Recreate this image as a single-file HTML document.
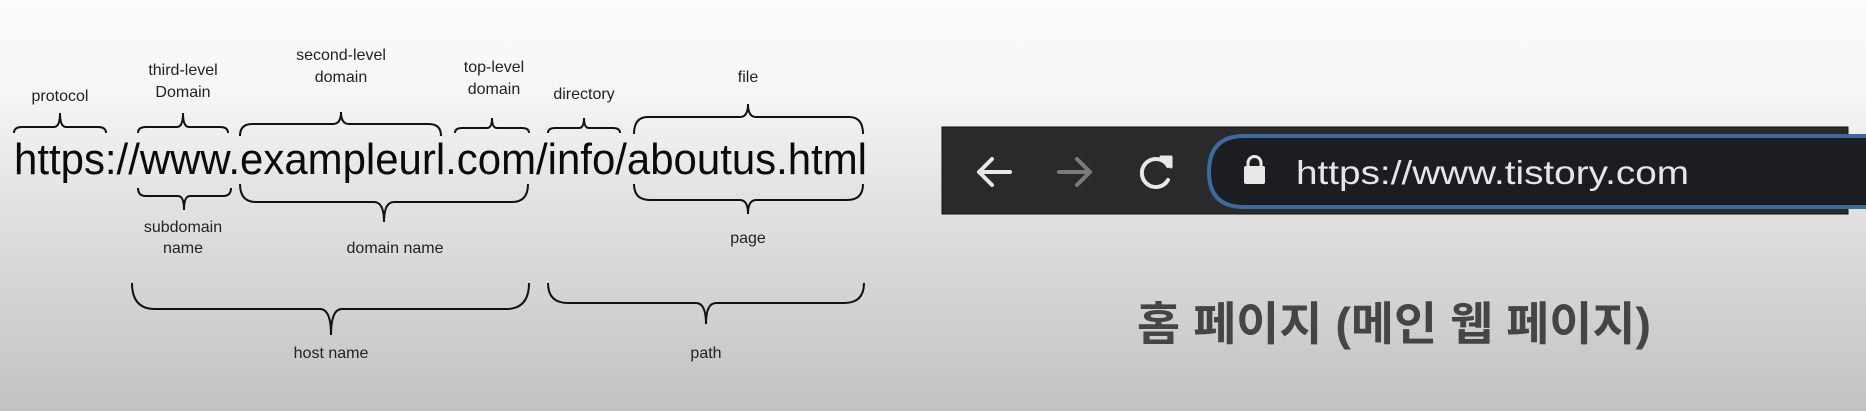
<!DOCTYPE html>
<html><head><meta charset="utf-8"><style>
html,body{margin:0;padding:0;width:1866px;height:411px;overflow:hidden}
body{background:linear-gradient(#fbfbfb 0px,#f6f6f6 90px,#e2e2e2 200px,#c2c2c2 411px)}
svg{display:block}
</style></head><body>
<svg width="1866" height="411" viewBox="0 0 1866 411" xmlns="http://www.w3.org/2000/svg">
<g fill="none" stroke="#111" stroke-width="2">
<path d="M14 133 Q14 127 22 127 L54 127 Q60 127 60 113 Q60 127 66 127 L98 127 Q106 127 106 133"/>
<path d="M138 133 Q138 127 146 127 L177 127 Q183 127 183 113 Q183 127 189 127 L220 127 Q228 127 228 133"/>
<path d="M240 136 Q240 124 252 124 L333 124 Q341 124 341 112 Q341 124 349 124 L429 124 Q441 124 441 136"/>
<path d="M455 133 Q455 128 462 128 L487 128 Q492 128 492 118 Q492 128 497 128 L522 128 Q529 128 529 133"/>
<path d="M548 133 Q548 128 555 128 L579 128 Q584 128 584 118 Q584 128 589 128 L613 128 Q620 128 620 133"/>
<path d="M634 134 Q634 117 648 117 L740 117 Q748 117 748 104 Q748 117 756 117 L849 117 Q863 117 863 134"/>
<path d="M138 188 Q138 196 146 196 L178 196 Q184 196 184 210 Q184 196 190 196 L223 196 Q231 196 231 188"/>
<path d="M240 184 Q240 202 256 202 L374 202 Q384 202 384 222 Q384 202 394 202 L512 202 Q528 202 528 184"/>
<path d="M634 184 Q634 200 650 200 L740 200 Q748 200 748 214 Q748 200 756 200 L847 200 Q863 200 863 184"/>
<path d="M132 283 Q132 309 155 309 L320 309 Q331 309 331 335 Q331 309 342 309 L506 309 Q529 309 529 283"/>
<path d="M548 283 Q548 303 568 303 L696 303 Q706 303 706 324 Q706 303 716 303 L844 303 Q864 303 864 283"/>
</g>
<text x="14" y="174" font-family="Liberation Sans, sans-serif" font-size="44" fill="#0a0a0a" textLength="853" lengthAdjust="spacingAndGlyphs">https://www.exampleurl.com/info/aboutus.html</text>
<g font-family="Liberation Sans, sans-serif" font-size="16" fill="#222" text-anchor="middle">
<text x="60" y="101">protocol</text>
<text x="183" y="75">third-level</text>
<text x="183" y="97">Domain</text>
<text x="341" y="60">second-level</text>
<text x="341" y="82">domain</text>
<text x="494" y="72">top-level</text>
<text x="494" y="94">domain</text>
<text x="584" y="99">directory</text>
<text x="748" y="82">file</text>
<text x="183" y="232">subdomain</text>
<text x="183" y="253">name</text>
<text x="395" y="253">domain name</text>
<text x="748" y="243">page</text>
<text x="331" y="358">host name</text>
<text x="706" y="358">path</text>
</g>
<rect x="942" y="127" width="906" height="87" fill="#2a2a2d" stroke="#111" stroke-width="1"/>
<path d="M1866 136 L1244 136 Q1209 136 1209 172 Q1209 207 1244 207 L1866 207" fill="#1c1d21" stroke="#3b6a9c" stroke-width="4"/>
<g fill="none" stroke-width="4" stroke-linecap="round" stroke-linejoin="round">
<path d="M1010 172 H979 M992 159 L979 172 L992 185" stroke="#e8e8e8"/>
<path d="M1059 172 H1090 M1077 159 L1090 172 L1077 185" stroke="#7a7a7a"/>
<path d="M1168 166 A14 14 0 1 0 1168 180" stroke="#e8e8e8"/>
</g>
<path d="M1161 157 L1171 157 L1171 167 Z" fill="#e8e8e8" stroke="#e8e8e8" stroke-width="3" stroke-linejoin="round"/>
<rect x="1244" y="166" width="21" height="18" rx="2" fill="#e8e8e8"/>
<path d="M1248 167 V163 A6.5 6.5 0 0 1 1261 163 V167" fill="none" stroke="#e8e8e8" stroke-width="3"/>
<text x="1296" y="184" font-family="Liberation Sans, sans-serif" font-size="33" fill="#e6e6e6" textLength="393" lengthAdjust="spacingAndGlyphs">https://www.tistory.com</text>
<text x="1137" y="340" font-family="Liberation Sans, 'Noto Sans CJK KR', sans-serif" font-weight="bold" font-size="46" fill="#454545" textLength="514" lengthAdjust="spacingAndGlyphs">홈 페이지 (메인 웹 페이지)</text>
</svg>
</body></html>
